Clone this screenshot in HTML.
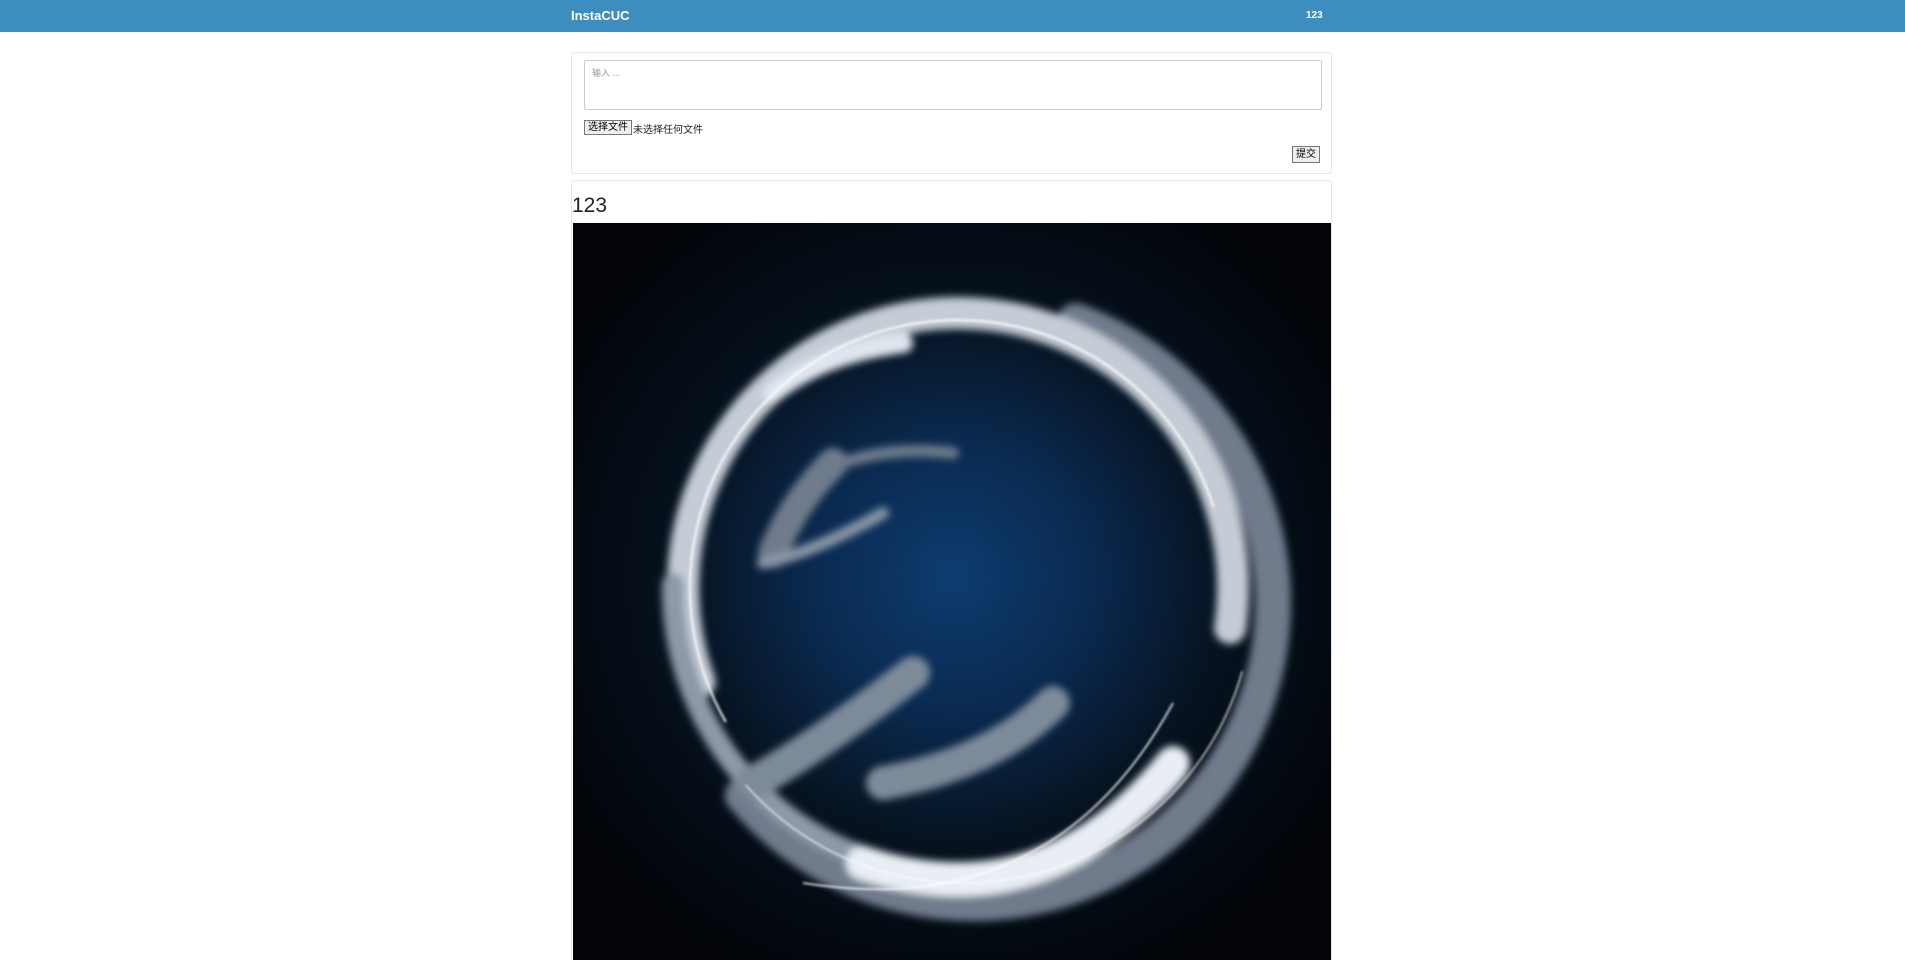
<!DOCTYPE html>
<html><head><meta charset="utf-8"><style>
*{box-sizing:border-box}
html,body{margin:0;width:1905px;height:960px;overflow:hidden;background:#fff;font-family:"Liberation Sans","Noto Sans CJK SC",sans-serif;}
.nav{position:absolute;left:0;top:0;width:1905px;height:32px;background:#3d8ebf;}
.brand{position:absolute;left:571px;top:8px;color:#fff;font-weight:bold;font-size:13px;}
.user{position:absolute;left:1306px;top:10px;color:#fff;font-weight:bold;font-size:10px;}
.p1{position:absolute;left:571px;top:52px;width:761px;height:122px;border:1px solid #e6e6e6;border-radius:3px;}
.ta{position:absolute;left:12px;top:7px;width:738px;height:50px;border:1px solid #ccc;border-radius:2px;color:#999;font-size:9px;padding:5px 7px;}
.fb{position:absolute;left:12px;top:67px;height:15px;border:1px solid #777;background:#eee;font-size:10px;padding:0 3px;line-height:13px;}
.ft{position:absolute;left:61px;top:68px;font-size:10px;color:#222;}
.sb{position:absolute;left:720px;top:93px;height:17px;border:1px solid #777;background:#eee;font-size:10px;padding:0 3px;line-height:15px;}
.p2{position:absolute;left:571px;top:180px;width:761px;height:780px;border:1px solid #e6e6e6;border-bottom:none;border-radius:3px 3px 0 0;}
.h{position:absolute;left:572px;top:194px;font-size:21px;color:#222;}
.img{position:absolute;left:573px;top:223px;width:758px;height:737px;}
</style></head><body>
<div class="nav"><div class="brand">InstaCUC</div><div class="user">123</div></div>
<div class="p1"><div class="ta">输入 ...</div><div class="fb">选择文件</div><div class="ft">未选择任何文件</div><div class="sb">提交</div></div>
<div class="p2"></div>
<div class="h">123</div>
<svg class="img" viewBox="0 0 758 737">
<defs>
<radialGradient id="bg" cx="0.5" cy="0.48" r="0.6"><stop offset="0" stop-color="#0e3c70"/><stop offset="0.3" stop-color="#0a2a50"/><stop offset="0.6" stop-color="#06121f"/><stop offset="1" stop-color="#020408"/></radialGradient>
<filter id="b"><feGaussianBlur stdDeviation="4"/></filter>
<filter id="b2"><feGaussianBlur stdDeviation="1"/></filter>
</defs>
<rect width="758" height="737" fill="url(#bg)"/>
<g filter="url(#b)" fill="none" stroke-linecap="round">
<circle cx="400" cy="380" r="300" stroke="#6f7c8c" stroke-width="36" stroke-dasharray="1100 800" transform="rotate(-70 400 380)"/>
<circle cx="385" cy="365" r="275" stroke="#c4ccd6" stroke-width="32" stroke-dasharray="1000 730" transform="rotate(160 385 365)"/>
<circle cx="385" cy="365" r="285" stroke="#8d99a8" stroke-width="22" stroke-dasharray="700 1100" transform="rotate(40 385 365)"/>
<path d="M290 640 Q470 700 600 540" stroke="#e8eef4" stroke-width="34"/>
<path d="M200 170 Q250 130 330 120" stroke="#dfe6ee" stroke-width="20"/>
<path d="M260 240 Q220 280 200 330" stroke="#6f7c8c" stroke-width="30"/>
<path d="M340 450 Q250 520 180 560" stroke="#7d8a9a" stroke-width="34"/>
<path d="M480 480 Q420 540 310 560" stroke="#7d8a9a" stroke-width="34"/>
<path d="M190 340 Q240 330 310 290" stroke="#8896a6" stroke-width="12"/>
<path d="M230 260 Q290 220 380 230" stroke="#6d7b8c" stroke-width="12"/>
</g>
<g filter="url(#b2)" fill="none" stroke="#fff" stroke-opacity="0.75">
<circle cx="385" cy="365" r="268" stroke-width="2.5" stroke-dasharray="900 800" transform="rotate(150 385 365)"/>
<circle cx="390" cy="370" r="290" stroke-width="1.5" stroke-dasharray="600 1200" transform="rotate(20 390 370)"/>
<path d="M230 660 Q480 700 600 480" stroke-width="2"/>
</g>
</svg>
</body></html>
